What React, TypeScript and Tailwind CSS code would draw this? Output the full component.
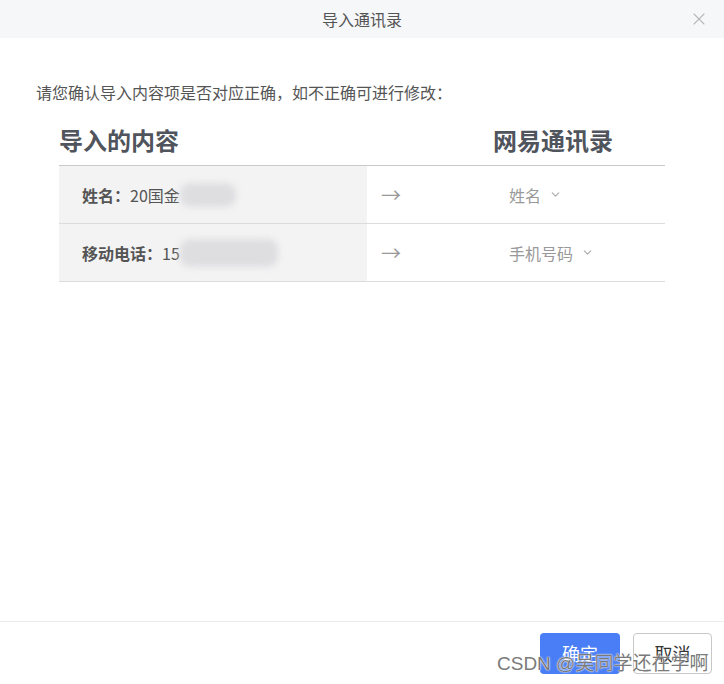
import { ChevronDown, X } from "lucide-react";

const FONT = { fontFamily: '"Noto Sans CJK SC", "Noto Sans", sans-serif' };

interface Row {
	label: string;
	value: string;
	target: string;
	blur: string;
}

const rows: Row[] = [
	{ label: "姓名：", value: "20国金", target: "姓名", blur: "w-[56px] h-[24px]" },
	{ label: "移动电话：", value: "15", target: "手机号码", blur: "w-[98px] h-[28px]" },
];

export default function App() {
	return (
		<div className="relative w-[724px] h-[684px] bg-white flex flex-col text-[#555]" style={FONT}>
			<div className="relative h-[38px] bg-[#f6f7f9] flex items-center justify-center text-[16px] text-[#555]">
				导入通讯录
				<X className="absolute right-[15px] top-[9px] text-[#b8b8b8]" size={20} strokeWidth={1.3} />
			</div>

			<div className="flex-1 flex flex-col">
				<p className="mt-[42px] pl-[36px] text-[16px] leading-[24px] text-[#555]">
					请您确认导入内容项是否对应正确，如不正确可进行修改：
				</p>

				<div className="mx-[59px] mt-[14px]">
					<div className="flex justify-between items-end h-[47px] pb-[10px] text-[24px] font-bold text-[#50545c] leading-[30px]">
						<span>导入的内容</span>
						<span className="mr-[52px]">网易通讯录</span>
					</div>
					<div className="border-t border-[#c9c9c9]">
						{rows.map((r) => (
							<div key={r.label} className="flex h-[58px] border-b border-[#dcdcdc]">
								<div className="w-[308px] bg-[#f3f3f3] flex items-center pl-[23px] text-[16px]">
									<span className="font-bold text-[#555]">{r.label}</span>
									<span className="text-[#555]">{r.value}</span>
									<span className={`${r.blur} bg-[#dedee1] rounded-[10px] blur-[3px]`} />
								</div>
								<div className="flex-1 flex items-center">
									<span className="ml-[14px] text-[20px] text-[#999]">→</span>
									<span className="ml-[108px] flex items-center gap-[8px] text-[16px] text-[#999]">
										{r.target}
										<ChevronDown size={13} strokeWidth={2} className="text-[#aaa]" />
									</span>
								</div>
							</div>
						))}
					</div>
				</div>
			</div>

			<div className="h-[63px] border-t border-[#ececec] flex items-start justify-end gap-[13px] pt-[11px] pr-[12px]">
				<button className="w-[80px] h-[41px] rounded-[4px] bg-[#4a7ef6] text-white text-[18px]">确定</button>
				<button className="w-[79px] h-[41px] rounded-[4px] border border-[#c8c8c8] bg-white text-[#333] text-[18px]">取消</button>
			</div>

			<span
				className="absolute left-[497px] top-[650px] text-[19px] text-[#7a7a7a] [text-shadow:0_0_2px_#fff,0_0_1px_#fff]"
				style={{ fontFamily: '"Liberation Sans", "Noto Sans CJK SC", sans-serif' }}
			>
				CSDN @吴同学还在学啊
			</span>
		</div>
	);
}
